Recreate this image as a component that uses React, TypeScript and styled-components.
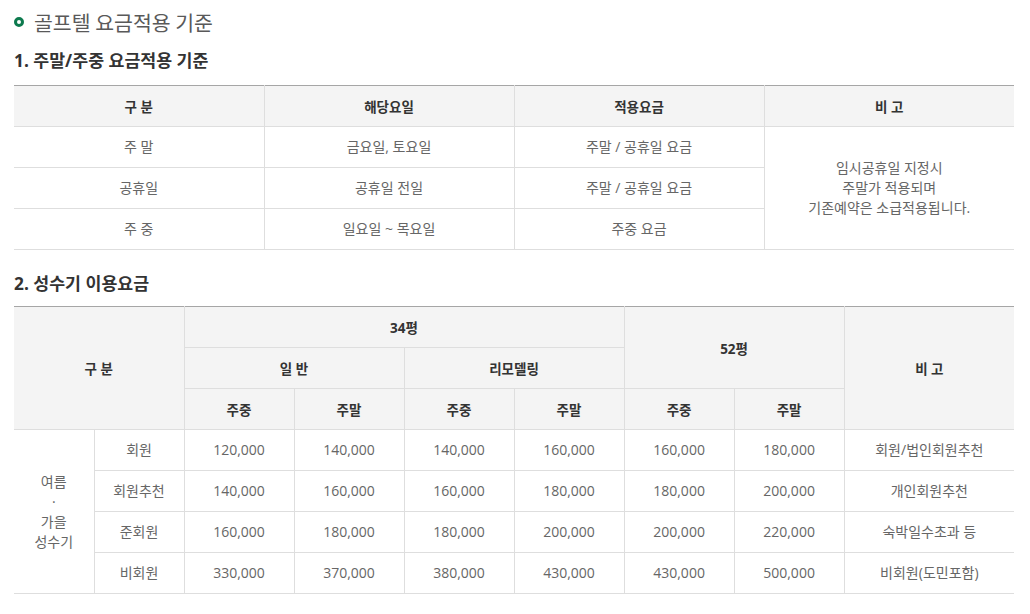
import React from "react";
import styled, { createGlobalStyle } from "styled-components";

const Global = createGlobalStyle`
  html, body { margin: 0; padding: 0; background: #fff; }
  body { font-family: "Open Sans", "Noto Sans CJK KR", sans-serif; }
`;

const Page = styled.div`
  width: 1000px;
  padding: 0 0 20px 14px;
`;

const MainTitle = styled.h2`
  display: flex;
  align-items: center;
  gap: 10px;
  margin: 10px 0 0 0;
  height: 24px;
  font-family: "Noto Sans CJK KR", sans-serif;
  font-size: 20.5px;
  font-weight: 400;
  color: #595959;
  line-height: 24px;
`;

const Bullet = styled.span`
  display: inline-block;
  flex: none;
  width: 4px;
  height: 4px;
  border: 3px solid #0d7a4e;
  border-radius: 50%;
`;

const SubTitle = styled.h3<{ $top: number }>`
  margin: ${(p) => p.$top}px 0 0 0;
  height: 24px;
  line-height: 24px;
  font-family: "Open Sans", "Noto Sans CJK KR", sans-serif;
  font-size: 17.3px;
  font-weight: 700;
  color: #333;
`;

const Table = styled.table<{ $top: number }>`
  width: 1000px;
  margin-top: ${(p) => p.$top}px;
  border-collapse: collapse;
  table-layout: fixed;
  border-top: 1px solid #a6a6a6;
`;

const Th = styled.th`
  height: 40px;
  padding: 0;
  background: #f4f4f4;
  border: 1px solid #dedede;
  border-top: none;
  font-family: "Open Sans", "Noto Sans CJK KR", sans-serif;
  font-size: 13.5px;
  font-weight: 700;
  color: #333;
  text-align: center;
  vertical-align: middle;
  &:first-child { border-left: none; }
  &:last-child { border-right: none; }
`;

const Td = styled.td<{ $edge?: "left" | "right" }>`
  height: 40px;
  padding: 0;
  border: 1px solid #dedede;
  font-family: "Open Sans", "Noto Sans CJK KR", sans-serif;
  font-size: 14px;
  font-weight: 400;
  color: #666;
  text-align: center;
  vertical-align: middle;
  line-height: 20px;
  ${(p) => (p.$edge === "left" ? "border-left: none;" : "")}
  ${(p) => (p.$edge === "right" ? "border-right: none;" : "")}
`;

const rows1 = [
  ["주 말", "금요일, 토요일", "주말 / 공휴일 요금"],
  ["공휴일", "공휴일 전일", "주말 / 공휴일 요금"],
  ["주 중", "일요일 ~ 목요일", "주중 요금"],
];

const rows2 = [
  ["회원", "120,000", "140,000", "140,000", "160,000", "160,000", "180,000", "회원/법인회원추천"],
  ["회원추천", "140,000", "160,000", "160,000", "180,000", "180,000", "200,000", "개인회원추천"],
  ["준회원", "160,000", "180,000", "180,000", "200,000", "200,000", "220,000", "숙박일수초과 등"],
  ["비회원", "330,000", "370,000", "380,000", "430,000", "430,000", "500,000", "비회원(도민포함)"],
];

export default function App() {
  return (
    <Page>
      <Global />
      <MainTitle>
        <Bullet />
        골프텔 요금적용 기준
      </MainTitle>

      <SubTitle $top={15}>1. 주말/주중 요금적용 기준</SubTitle>
      <Table $top={12}>
        <colgroup>
          <col style={{ width: 250 }} />
          <col style={{ width: 250 }} />
          <col style={{ width: 250 }} />
          <col style={{ width: 250 }} />
        </colgroup>
        <thead>
          <tr>
            <Th>구 분</Th>
            <Th>해당요일</Th>
            <Th>적용요금</Th>
            <Th>비 고</Th>
          </tr>
        </thead>
        <tbody>
          {rows1.map((r, i) => (
            <tr key={i}>
              <Td $edge="left">{r[0]}</Td>
              <Td>{r[1]}</Td>
              <Td>{r[2]}</Td>
              {i === 0 && (
                <Td rowSpan={3} $edge="right">
                  임시공휴일 지정시
                  <br />
                  주말가 적용되며
                  <br />
                  기존예약은 소급적용됩니다.
                </Td>
              )}
            </tr>
          ))}
        </tbody>
      </Table>

      <SubTitle $top={22}>2. 성수기 이용요금</SubTitle>
      <Table $top={10}>
        <colgroup>
          <col style={{ width: 80 }} />
          <col style={{ width: 90 }} />
          <col style={{ width: 110 }} />
          <col style={{ width: 110 }} />
          <col style={{ width: 110 }} />
          <col style={{ width: 110 }} />
          <col style={{ width: 110 }} />
          <col style={{ width: 110 }} />
          <col style={{ width: 170 }} />
        </colgroup>
        <thead>
          <tr>
            <Th colSpan={2} rowSpan={3}>
              구 분
            </Th>
            <Th colSpan={4}>34평</Th>
            <Th colSpan={2} rowSpan={2}>
              52평
            </Th>
            <Th rowSpan={3}>비 고</Th>
          </tr>
          <tr>
            <Th colSpan={2}>일 반</Th>
            <Th colSpan={2}>리모델링</Th>
          </tr>
          <tr>
            <Th>주중</Th>
            <Th>주말</Th>
            <Th>주중</Th>
            <Th>주말</Th>
            <Th>주중</Th>
            <Th>주말</Th>
          </tr>
        </thead>
        <tbody>
          {rows2.map((r, i) => (
            <tr key={i}>
              {i === 0 && (
                <Td rowSpan={4} $edge="left">
                  여름
                  <br />
                  ·
                  <br />
                  가을
                  <br />
                  성수기
                </Td>
              )}
              {r.map((c, j) => (
                <Td key={j} $edge={j === r.length - 1 ? "right" : undefined}>
                  {c}
                </Td>
              ))}
            </tr>
          ))}
        </tbody>
      </Table>
    </Page>
  );
}
